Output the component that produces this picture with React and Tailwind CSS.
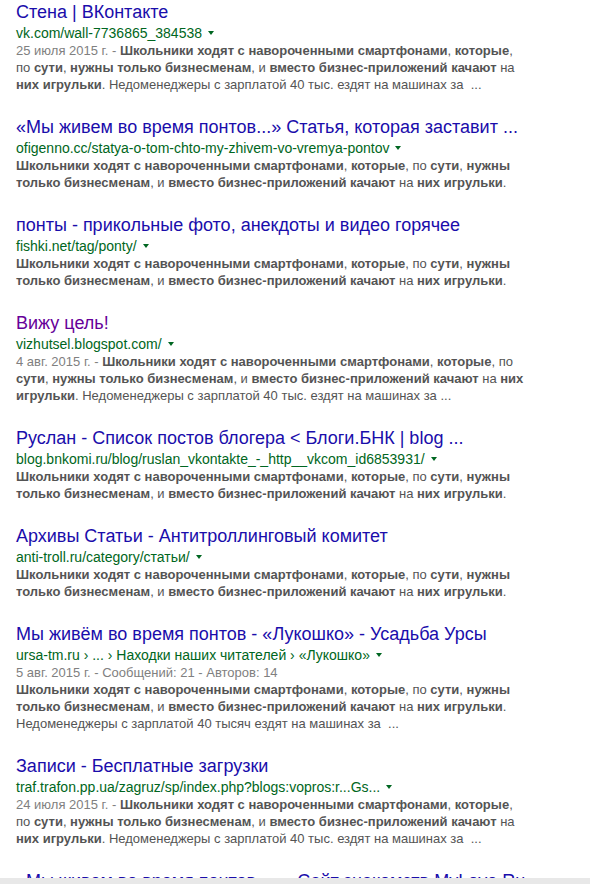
const B = ({ children }) => <b className="font-bold">{children}</b>

const Arrow = () => (
  <span className="inline-block ml-[6px] align-middle mb-[2px] w-0 h-0 border-l-[3.5px] border-r-[3.5px] border-t-[4px] border-l-transparent border-r-transparent border-t-[#006621]" />
)

const LONG = (date) => [
  <>
    {date && <span className="text-[#808080]">{date} - </span>}
    <B>Школьники ходят с навороченными смартфонами</B>, <B>которые</B>,
  </>,
  <>
    по <B>сути</B>, <B>нужны только бизнесменам</B>, и <B>вместо бизнес-приложений качают</B> на
  </>,
  <>
    <B>них игрульки</B>. Недоменеджеры с зарплатой 40 тыс. ездят на машинах за&nbsp; ...
  </>,
]

const SHORT = [
  <>
    <B>Школьники ходят с навороченными смартфонами</B>, <B>которые</B>, по <B>сути</B>, <B>нужны</B>
  </>,
  <>
    <B>только бизнесменам</B>, и <B>вместо бизнес-приложений качают</B> на <B>них игрульки</B>.
  </>,
]

const RESULTS = [
  { title: 'Стена | ВКонтакте', url: 'vk.com/wall-7736865_384538', lines: LONG('25 июля 2015 г.') },
  { title: '«Мы живем во время понтов...» Статья, которая заставит ...', url: 'ofigenno.cc/statya-o-tom-chto-my-zhivem-vo-vremya-pontov', lines: SHORT },
  { title: 'понты - прикольные фото, анекдоты и видео горячее', url: 'fishki.net/tag/ponty/', lines: SHORT },
  {
    title: 'Вижу цель!',
    visited: true,
    url: 'vizhutsel.blogspot.com/',
    lines: [
      <>
        <span className="text-[#808080]">4 авг. 2015 г. - </span>
        <B>Школьники ходят с навороченными смартфонами</B>, <B>которые</B>, по
      </>,
      <>
        <B>сути</B>, <B>нужны только бизнесменам</B>, и <B>вместо бизнес-приложений качают</B> на <B>них</B>
      </>,
      <>
        <B>игрульки</B>. Недоменеджеры с зарплатой 40 тыс. ездят на машинах за ...
      </>,
    ],
  },
  { title: 'Руслан - Список постов блогера < Блоги.БНК | blog ...', url: 'blog.bnkomi.ru/blog/ruslan_vkontakte_-_http__vkcom_id6853931/', lines: SHORT },
  { title: 'Архивы Статьи - Антитроллинговый комитет', url: 'anti-troll.ru/category/статьи/', lines: SHORT },
  {
    title: 'Мы живём во время понтов - «Лукошко» - Усадьба Урсы',
    url: 'ursa-tm.ru › ... › Находки наших читателей › «Лукошко»',
    lines: [
      <span className="text-[#808080]">5 авг. 2015 г. - Сообщений: 21 - Авторов: 14</span>,
      ...SHORT,
      <>Недоменеджеры с зарплатой 40 тысяч ездят на машинах за&nbsp; ...</>,
    ],
  },
  { title: 'Записи - Бесплатные загрузки', url: 'traf.trafon.pp.ua/zagruz/sp/index.php?blogs:vopros:r...Gs...', lines: LONG('24 июля 2015 г.') },
  { title: '«Мы живем во время понтов...» - Сайт знакомств MyLove.Ru', url: 'mylove.ru', lines: SHORT },
]

export default function App() {
  return (
    <div className="relative h-[884px] overflow-hidden bg-white font-['Liberation_Sans',Arial,sans-serif]">
      <div className="flex flex-col gap-[23px] pl-4 pt-[1px]">
        {RESULTS.map((r, i) => (
          <div key={i} className="flex flex-col">
            <div className={`text-[18px] leading-[22px] whitespace-nowrap ${r.visited ? 'text-[#609]' : 'text-[#1a0dab]'}`}>
              {r.title}
            </div>
            <div className="mt-[1px] text-[14px] leading-[18px] text-[#006621] whitespace-nowrap">
              {r.url}
              <Arrow />
            </div>
            <div className="text-[13px] leading-[17px] text-[#545454]">
              {r.lines.map((l, j) => (
                <div key={j} className="whitespace-nowrap">{l}</div>
              ))}
            </div>
          </div>
        ))}
      </div>
      <div className="absolute left-0 right-0 bottom-0 h-[6px] bg-[#e8e8e8]" />
    </div>
  )
}
